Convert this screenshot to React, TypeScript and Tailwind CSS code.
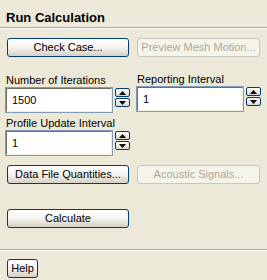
const font = { fontFamily: '"Liberation Sans", Arial, sans-serif' };

function XpButton({ label, disabled, className = '' }: { label: string; disabled?: boolean; className?: string }) {
  if (disabled) {
    return (
      <div className={`h-[19px] flex items-center justify-center whitespace-nowrap rounded-[3px] border border-[#c9c7ba] bg-[#f5f4ea] text-[11px] text-[#aca899] ${className}`}>
        {label}
      </div>
    );
  }
  return (
    <div
      className={`h-[19px] flex items-center justify-center whitespace-nowrap rounded-[3px] border border-[#003c74] bg-gradient-to-b from-white via-[#f4f3ee] to-[#d6d0c5] text-[11px] text-black ${className}`}
    >
      {label}
    </div>
  );
}

function Spinner() {
  return (
    <div className="flex flex-col gap-[1px] pt-[1px]">
      <div className="w-[15px] h-[9px] flex items-center justify-center rounded-[2px] border border-[#003c74] bg-gradient-to-b from-white to-[#dcd8cc]">
        <svg width="7" height="4" viewBox="0 0 7 4">
          <path d="M0 4 L3.5 0 L7 4 Z" fill="#000" />
        </svg>
      </div>
      <div className="w-[15px] h-[9px] flex items-center justify-center rounded-[2px] border border-[#003c74] bg-gradient-to-b from-white to-[#dcd8cc]">
        <svg width="7" height="4" viewBox="0 0 7 4">
          <path d="M0 0 L7 0 L3.5 4 Z" fill="#000" />
        </svg>
      </div>
    </div>
  );
}

function NumField({ label, value }: { label: string; value: string }) {
  return (
    <div className="flex flex-col">
      <div className="h-[14px] leading-[14px] text-[11px] text-black pl-[1px] whitespace-nowrap">{label}</div>
      <div className="flex gap-[2px]">
        <div className="w-[108px] h-[26px] border border-[#7f9db9]">
          <div className="h-full border-t border-l border-t-[#716f64] border-l-[#716f64] border-b border-r border-b-[#f1efe2] border-r-[#f1efe2] bg-white flex items-center pl-[5px] text-[11px] text-black">
            {value}
          </div>
        </div>
        <Spinner />
      </div>
    </div>
  );
}

export default function App() {
  return (
    <div className="w-[267px] h-[280px] bg-[#ece9d8] overflow-hidden" style={font}>
      <div className="pl-[6px] pt-[10px] h-[27px] text-[13px] font-bold leading-[16px] text-black">Run Calculation</div>
      <div className="h-[1px] bg-[#aca899]" />
      <div className="h-[1px] bg-white" />

      <div className="flex gap-[8px] pl-[7px] mt-[9px]">
        <XpButton label="Check Case..." className="w-[122px]" />
        <XpButton label="Preview Mesh Motion..." disabled className="w-[123px]" />
      </div>

      <div className="grid grid-cols-[131px_1fr] pl-[5px] mt-[16px] gap-y-[3px]">
        <NumField label="Number of Iterations" value="1500" />
        <div className="-mt-[1px]">
          <NumField label="Reporting Interval" value="1" />
        </div>
        <NumField label="Profile Update Interval" value="1" />
      </div>

      <div className="flex gap-[8px] pl-[7px] mt-[9px]">
        <XpButton label="Data File Quantities..." className="w-[122px]" />
        <XpButton label="Acoustic Signals..." disabled className="w-[123px]" />
      </div>

      <div className="pl-[7px] mt-[25px]">
        <XpButton label="Calculate" className="w-[122px]" />
      </div>

      <div className="mt-[21px] h-[1px] bg-[#aca899]" />
      <div className="h-[1px] bg-white" />

      <div className="pl-[7px] mt-[8px]">
        <XpButton label="Help" className="w-[31px]" />
      </div>
    </div>
  );
}
